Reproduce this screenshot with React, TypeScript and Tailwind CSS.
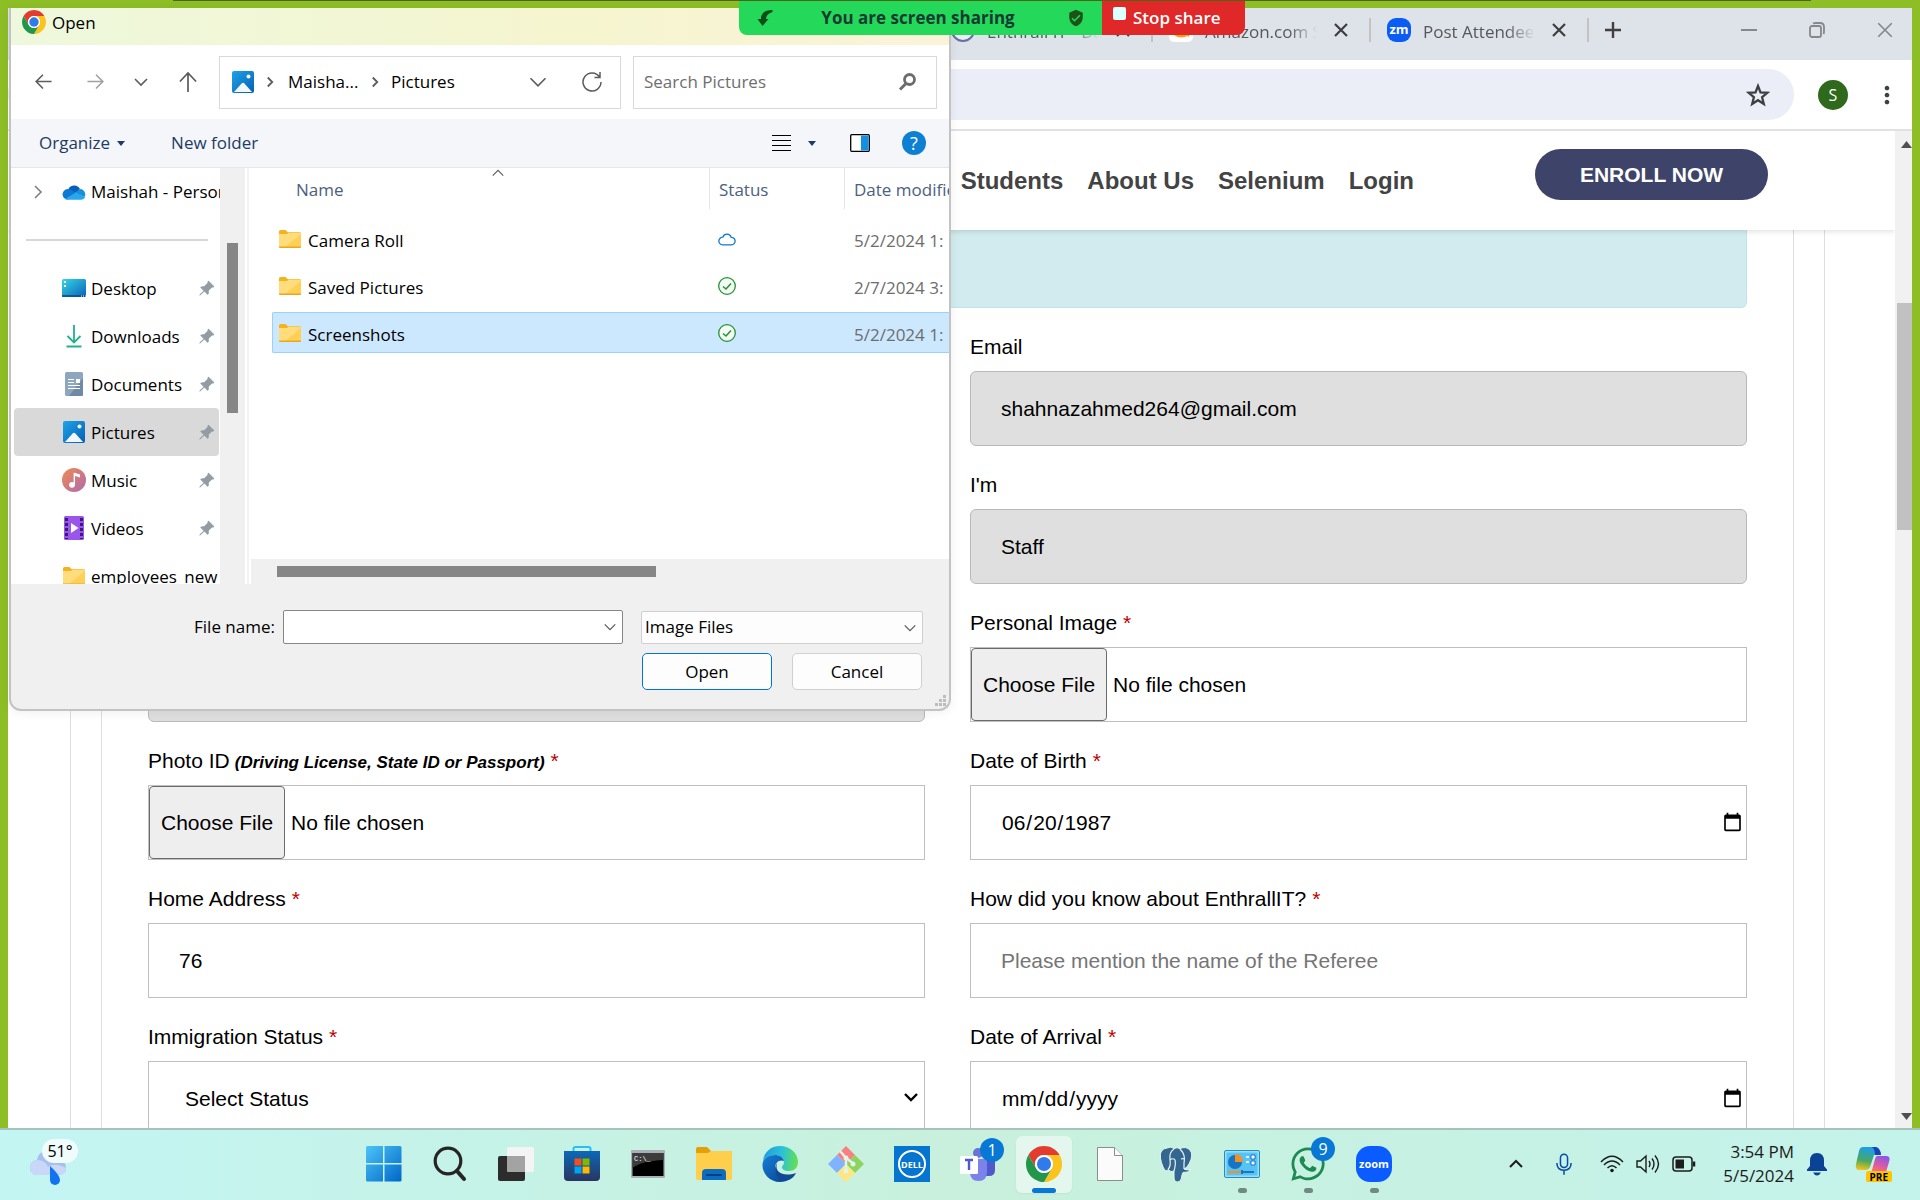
import React, { useId } from "react";
import { FaWhatsapp } from "react-icons/fa";
import { MdMoreVert, MdVerifiedUser } from "react-icons/md";
import { BsPinAngleFill } from "react-icons/bs";

/* ---------- icons ---------- */

function ChromeLogo({ className }: { className: string }) {
  return (
    <svg viewBox="2 2 44 44" className={className} aria-hidden="true">
      <path d="M4.95 13A22 22 0 0 1 43.05 13H24A11 11 0 0 0 14.47 29.5Z" fill="#e33b2e" />
      <path d="M43.05 13A22 22 0 0 1 24 46L33.53 29.5A11 11 0 0 0 24 13Z" fill="#fcc31c" />
      <path d="M24 46A22 22 0 0 1 4.95 13L14.47 29.5A11 11 0 0 0 33.53 29.5Z" fill="#22964a" />
      <circle cx="24" cy="24" r="11" fill="#fff" />
      <circle cx="24" cy="24" r="8.6" fill="#2f7bea" />
    </svg>
  );
}

function Folder() {
  return (
    <svg viewBox="0 0 22 18" className="h-[18px] w-[22px] shrink-0" aria-hidden="true">
      <path d="M0 1.5Q0 0 1.5 0H6.5L8.5 2H20.5Q22 2 22 3.5V8H0Z" fill="#f5b21c" />
      <path d="M0 4H8L9.5 2.6H20.5Q22 2.6 22 4V17H0Z" fill="#ffdc7c" />
      <path d="M22 4V17H6Z" fill="#ffd054" />
      <path d="M0 16.5H22V17.2Q22 18 21 18H1Q0 18 0 17.2Z" fill="#eaa71e" />
    </svg>
  );
}

function PictureIcon() {
  const id = useId();
  return (
    <svg viewBox="0 0 22 22" className="size-[22px] shrink-0" aria-hidden="true">
      <defs>
        <linearGradient id={id} x1="0" y1="0" x2="1" y2="1">
          <stop offset="0" stopColor="#1fa3e8" />
          <stop offset="1" stopColor="#0560b4" />
        </linearGradient>
      </defs>
      <rect width="22" height="22" rx="2" fill={`url(#${id})`} />
      <path d="M2 21L9.8 12.3Q11 11.2 12.2 12.3L20 21Z" fill="#f1f7fd" />
      <circle cx="16.5" cy="5.5" r="2" fill="#fff" />
    </svg>
  );
}

function OneDrive() {
  return (
    <svg viewBox="0 0 24 16" className="h-4 w-6 shrink-0" aria-hidden="true">
      <path d="M6 6A6.5 6.5 0 0 1 18 5L13 11Z" fill="#0a5fb8" />
      <path d="M5.5 15.5A5.2 5.2 0 1 1 8 5.6L18 11Z" fill="#0f78d4" />
      <path d="M18.5 5A5.3 5.3 0 0 1 22.5 13L12 9Z" fill="#1490df" />
      <path d="M3 15L14 8.5L23 13Q22 15.8 19 15.8H5.5Q4 15.8 3 15Z" fill="#28a8ea" />
    </svg>
  );
}

function DesktopIcon() {
  const id = useId();
  return (
    <svg viewBox="0 0 24 18" className="h-[18px] w-6 shrink-0" aria-hidden="true">
      <defs>
        <linearGradient id={id} x1="0" y1="0" x2="1" y2="1">
          <stop offset="0" stopColor="#35d6e6" />
          <stop offset="1" stopColor="#0b62b8" />
        </linearGradient>
      </defs>
      <rect width="24" height="18" rx="1.5" fill={`url(#${id})`} />
      <path d="M2 2h2v2H2zM2 6h2v2H2z" fill="#fff" />
      <path d="M0 17H24" stroke="#0a4c88" strokeWidth="1.6" />
      <path d="M19 17H24" stroke="#fff" strokeWidth="1" strokeDasharray="1 1" />
    </svg>
  );
}

function DownloadIcon() {
  return (
    <svg viewBox="0 0 18 24" className="h-6 w-[18px] shrink-0" fill="none" stroke="#22b08f" strokeWidth="1.8" aria-hidden="true">
      <path d="M9 1V18M2.5 12L9 18.5L15.500 12M1.500 22.500H16.500" />
    </svg>
  );
}

function DocumentIcon() {
  return (
    <svg viewBox="0 0 18 24" className="h-6 w-[18px] shrink-0" aria-hidden="true">
      <rect width="18" height="24" rx="1.500" fill="#8fa6c0" />
      <path d="M18 6V22.500Q18 24 16.500 24H4Z" fill="#6f89a6" />
      <path d="M3 7.500H9M3 10.500H9M3 13.500H15M3 16.500H15" stroke="#fff" strokeWidth="1.200" />
      <rect x="11" y="7" width="4" height="4" fill="#fff" />
    </svg>
  );
}

function MusicIcon() {
  const id = useId();
  return (
    <svg viewBox="0 0 24 24" className="size-6 shrink-0" aria-hidden="true">
      <defs>
        <linearGradient id={id} x1="0" y1="0" x2="1" y2="1">
          <stop offset="0" stopColor="#f08a4f" />
          <stop offset="1" stopColor="#b06ab0" />
        </linearGradient>
      </defs>
      <circle cx="12" cy="12" r="12" fill={`url(#${id})`} />
      <circle cx="10" cy="16.800" r="2.900" fill="#fff" />
      <path d="M11.600 17V4.500L18 6.500V9.500L13 8V17Z" fill="#fff" />
    </svg>
  );
}

function VideoIcon() {
  return (
    <svg viewBox="0 0 20 24" className="h-6 w-5 shrink-0" aria-hidden="true">
      <rect width="20" height="24" rx="1.500" fill="#9a55ea" />
      <path d="M2.500 2V23M17.500 2V23" stroke="#3c1a78" strokeWidth="3" strokeDasharray="3 2" />
      <path d="M7 7L14.500 12L7 17Z" fill="#fff" />
    </svg>
  );
}

function Chevron({ dir, className, stroke = 1.6 }: { dir: "down" | "right" | "up"; className: string; stroke?: number }) {
  const d = { down: "M2 5L8 11L14 5", right: "M5 2L11 8L5 14", up: "M2 11L8 5L14 11" }[dir];
  return (
    <svg viewBox="0 0 16 16" className={className} fill="none" stroke="currentColor" strokeWidth={stroke} aria-hidden="true">
      <path d={d} />
    </svg>
  );
}

function Arrow({ dir, className }: { dir: "left" | "right" | "up"; className: string }) {
  const d = {
    left: "M20 10H2M10 2L2 10L10 18",
    right: "M0 10H18M10 2L18 10L10 18",
    up: "M10 21V1M1.500 10L10 1L18.500 10",
  }[dir];
  return (
    <svg viewBox="0 0 20 21" className={className} fill="none" stroke="currentColor" strokeWidth="1.800" aria-hidden="true">
      <path d={d} />
    </svg>
  );
}

function Cross({ className, stroke = 2.2 }: { className: string; stroke?: number }) {
  return (
    <svg viewBox="0 0 16 16" className={className} stroke="currentColor" strokeWidth={stroke} aria-hidden="true">
      <path d="M2 2L14 14M14 2L2 14" />
    </svg>
  );
}

function Caret() {
  return (
    <svg viewBox="0 0 8 5" className="h-[5px] w-2" aria-hidden="true">
      <path d="M0 0H8L4 5Z" fill="#1d3b66" />
    </svg>
  );
}

/* ---------- browser ---------- */

function Tab({ icon, title }: { icon: React.ReactNode; title: string }) {
  return (
    <>
      <div className="flex w-[216px] items-center pl-4">
        {icon}
        <span className="ml-3 mt-1 w-28 overflow-hidden text-[17px] leading-6 whitespace-nowrap text-[#55585c] [mask-image:linear-gradient(to_right,black_75%,transparent_100%)]">
          {title}
        </span>
        <button aria-label={`Close ${title}`} className="ml-4 text-[#3c3e41]">
          <Cross className="size-4" />
        </button>
      </div>
      <div className="h-6 w-0.5 bg-[#c3c3c3]" />
    </>
  );
}

function BrowserChrome() {
  return (
    <>
      <div className="flex h-[52px] shrink-0 items-center justify-end bg-[#dee2e9] pr-[18px] pb-2">
        <Tab
          title="Enthrall IT - Da"
          icon={<span className="size-6 shrink-0 rounded-full border-2 border-[#6670a8] bg-[#eceef4]" />}
        />
        <Tab
          title="Amazon.com Sp"
          icon={
            <svg viewBox="0 0 24 24" className="size-6 shrink-0" aria-hidden="true">
              <rect width="24" height="24" rx="5" fill="#fff" />
              <path d="M4 15Q12 21 19 16" fill="none" stroke="#f79c1d" strokeWidth="2.500" />
              <path d="M16 14L20.500 14.500L19 18.500" fill="none" stroke="#f79c1d" strokeWidth="1.600" />
            </svg>
          }
        />
        <Tab
          title="Post Attendee -"
          icon={
            <span className="flex size-6 shrink-0 items-center justify-center rounded-[9px] bg-[#0b5cf5] pb-0.5 text-[13px] leading-none font-bold text-white">
              zm
            </span>
          }
        />
        <button aria-label="New tab" className="ml-4 text-[#3f4143]">
          <svg viewBox="0 0 16 16" className="size-4" stroke="currentColor" strokeWidth="2.400">
            <path d="M8 0V16M0 8H16" />
          </svg>
        </button>
        <div className="ml-[119px] flex items-center gap-[50px] text-[#85888c]">
          <button aria-label="Minimize">
            <svg viewBox="0 0 18 18" className="size-[18px]" stroke="currentColor" strokeWidth="2">
              <path d="M1 9H17" />
            </svg>
          </button>
          <button aria-label="Restore">
            <svg viewBox="0 0 18 18" className="size-[18px]" fill="none" stroke="currentColor" strokeWidth="1.800">
              <rect x="2" y="5" width="11" height="11" rx="2" />
              <path d="M5 2.500Q6 2 8 2H12Q16 2 16 6V10Q16 12 15.500 13" />
            </svg>
          </button>
          <button aria-label="Close window">
            <Cross className="size-[18px]" stroke={1.5} />
          </button>
        </div>
      </div>
      <div className="flex h-[71px] shrink-0 items-center border-b-2 border-[#dfe1e4] bg-white pr-[11px]">
        <div className="flex h-[51px] flex-1 items-center justify-end rounded-full bg-[#ebeef7] pr-6">
          <button aria-label="Bookmark this page" className="text-[#3c4043]">
            <svg viewBox="0 0 24 24" className="size-6" fill="none" stroke="currentColor" strokeWidth="2.300">
              <path d="M12 3L14.500 9.300L21.300 9.800L16.100 14.200L17.800 20.900L12 17.200L6.200 20.900L7.900 14.200L2.700 9.800L9.500 9.300Z" />
            </svg>
          </button>
        </div>
        <button className="ml-6 flex size-[30px] items-center justify-center rounded-full bg-[#2f691c] text-base text-white">S</button>
        <button aria-label="Menu" className="ml-[25px] text-[#3c4043]">
          <MdMoreVert size={28} />
        </button>
      </div>
    </>
  );
}

/* ---------- web page form ---------- */

function Field({ id, label, note, required, place, children }: { id: string; label: string; note?: string; required?: boolean; place: string; children: React.ReactNode }) {
  return (
    <div className={place}>
      <label htmlFor={id} className="mb-3 block h-6 leading-6">
        {label}
        {note && <b className="ml-[5px] text-[17px] italic">{note}</b>}
        {required && <span className="ml-1.5 text-[#c00000]">*</span>}
      </label>
      {children}
    </div>
  );
}

const box = "block h-[75px] w-full border border-[#bfbfbf] bg-white";
const gray = "block h-[75px] w-full rounded-md border border-[#b9b9b9] bg-[#dfdfdf] pl-[30px]";
const file =
  "block h-[75px] w-full border border-[#bfbfbf] bg-white file:mr-1.5 file:h-[73px] file:rounded-sm file:border file:border-solid file:border-[#6b6b6b] file:bg-[#eeeeee] file:px-[11px]";

function WebPage() {
  return (
    <div className="flex min-h-0 flex-1 bg-white">
      <main className="min-w-0 flex-1 overflow-hidden font-['Liberation_Sans',Arial,sans-serif] text-[21px] text-black">
        <header className="relative flex h-[99px] items-start justify-end bg-white pt-[18px] pr-[127px] shadow-[0_1px_6px_rgba(0,0,0,0.15)]">
          <nav className="flex gap-6 pt-4 pr-[121px] text-2xl leading-8 font-bold text-[#434343]">
            <a href="#students">Students</a>
            <a href="#about">About Us</a>
            <a href="#selenium">Selenium</a>
            <a href="#login">Login</a>
          </nav>
          <a href="#enroll" className="flex h-[51px] w-[233px] items-center justify-center rounded-full bg-[#3e4469] font-bold text-white">
            ENROLL NOW
          </a>
        </header>
        <div className="mr-[70px] ml-[62px] border-x border-[#dedede] px-[30px]">
          <div className="border-x border-[#dedede] px-[46px]">
            <div className="h-[78px] rounded-b-md border border-t-0 border-[#bee5eb] bg-[#d1ebef]" />
            <form className="mt-[27px] grid grid-cols-2 gap-x-[45px] gap-y-[27px]">
              <Field id="email" label="Email" place="col-start-2">
                <input id="email" className={gray} readOnly value="shahnazahmed264@gmail.com" />
              </Field>
              <Field id="role" label="I'm" place="col-start-2">
                <input id="role" className={gray} readOnly value="Staff" />
              </Field>
              <div className="col-start-1 self-end">
                <input aria-label="Phone" className={gray} readOnly />
              </div>
              <Field id="image" label="Personal Image" required place="col-start-2">
                <input id="image" type="file" className={file} />
              </Field>
              <Field id="photo" label="Photo ID" note="(Driving License, State ID or Passport)" required place="col-start-1">
                <input id="photo" type="file" className={file} />
              </Field>
              <Field id="dob" label="Date of Birth" required place="col-start-2">
                <input id="dob" type="date" defaultValue="1987-06-20" className={`${box} pr-px pl-[30px]`} />
              </Field>
              <Field id="address" label="Home Address" required place="col-start-1">
                <input id="address" defaultValue="76" className={`${box} pl-[30px]`} />
              </Field>
              <Field id="referee" label="How did you know about EnthrallIT?" required place="col-start-2">
                <input id="referee" placeholder="Please mention the name of the Referee" className={`${box} pl-[30px] placeholder:text-[#757575]`} />
              </Field>
              <Field id="status" label="Immigration Status" required place="col-start-1">
                <div className="relative">
                  <select id="status" className={`${box} appearance-none pl-9`}>
                    <option>Select Status</option>
                  </select>
                  <Chevron dir="down" stroke={2.4} className="pointer-events-none absolute top-7 right-1.5 size-4" />
                </div>
              </Field>
              <Field id="arrival" label="Date of Arrival" required place="col-start-2">
                <input id="arrival" type="date" className={`${box} pr-px pl-[30px]`} />
              </Field>
            </form>
          </div>
        </div>
      </main>
      <div className="flex w-[17px] shrink-0 flex-col items-end bg-[#f1f1f1]">
        <svg viewBox="0 0 11 7" className="mt-2.5 h-[7px] w-[11px]"><path d="M0 7L5.500 0L11 7Z" fill="#505050" /></svg>
        <div className="mt-[155px] h-[227px] w-[15px] bg-[#c1c1c1]" />
        <svg viewBox="0 0 11 7" className="mt-auto mb-2 h-[7px] w-[11px]"><path d="M0 0L5.500 7L11 0Z" fill="#505050" /></svg>
      </div>
    </div>
  );
}

/* ---------- file dialog ---------- */

const places = [
  { name: "Desktop", icon: <DesktopIcon /> },
  { name: "Downloads", icon: <DownloadIcon /> },
  { name: "Documents", icon: <DocumentIcon /> },
  { name: "Pictures", icon: <PictureIcon />, active: true },
  { name: "Music", icon: <MusicIcon /> },
  { name: "Videos", icon: <VideoIcon /> },
];

const entries = [
  { name: "Camera Roll", cloud: true, date: "5/2/2024 1:" },
  { name: "Saved Pictures", cloud: false, date: "2/7/2024 3:" },
  { name: "Screenshots", cloud: false, date: "5/2/2024 1:", selected: true },
];

function StatusIcon({ cloud }: { cloud: boolean }) {
  return cloud ? (
    <svg viewBox="0 0 18 14" className="h-3.5 w-[18px]" fill="none" stroke="#0f7ad6" strokeWidth="1.300" role="img" aria-label="Online only">
      <path d="M4.500 12.800A3.700 3.700 0 1 1 4.800 5.200A4.400 4.400 0 0 1 13.200 5.400A3.700 3.700 0 1 1 13.600 12.800Z" />
    </svg>
  ) : (
    <svg viewBox="0 0 18 18" className="size-[18px]" fill="#f4fbf4" stroke="#249230" strokeWidth="1.300" role="img" aria-label="Available">
      <circle cx="9" cy="9" r="8.300" />
      <path d="M5 9.500L8 12L13 6.500" fill="none" strokeWidth="1.500" />
    </svg>
  );
}

function FileDialog() {
  return (
    <section
      role="dialog"
      aria-label="Open"
      className="absolute top-2 left-[9px] flex w-[942px] flex-col overflow-hidden rounded-b-xl border-2 border-t-0 border-[#c3c3c3] bg-[#f0f0f0] text-black shadow-[0_2px_12px_rgba(0,0,0,0.06)]"
    >
      <div className="flex h-[37px] items-start bg-linear-to-r from-[#eef8dc] via-[#f5f5cf] via-60% to-[#fbf3d9] pl-[11px]">
        <ChromeLogo className="mt-0.5 size-6" />
        <h1 className="ml-1.5 leading-[29px]">Open</h1>
      </div>
      <div className="flex h-[74px] items-center bg-white pr-3 pl-[23px] text-[#5c5c5c]">
        <button aria-label="Back"><Arrow dir="left" className="size-[18px]" /></button>
        <button aria-label="Forward" className="ml-[35px] text-[#a0a0a0]"><Arrow dir="right" className="size-[18px]" /></button>
        <button aria-label="Recent" className="ml-7"><Chevron dir="down" className="size-4" /></button>
        <button aria-label="Up" className="ml-[29px]"><Arrow dir="up" className="size-5" /></button>
        <div className="ml-[21px] flex h-[53px] w-[402px] items-center border border-[#d9d9d9] pl-3">
          <PictureIcon />
          <Chevron dir="right" stroke={2.4} className="ml-2.5 size-3 shrink-0" />
          <span className="ml-3 w-[71px] text-black">Maisha...</span>
          <Chevron dir="right" stroke={2.4} className="ml-2.5 size-3 shrink-0" />
          <span className="ml-2.5 text-black">Pictures</span>
          <button aria-label="Previous locations" className="ml-auto"><Chevron dir="down" stroke={1.3} className="size-5" /></button>
          <button aria-label="Refresh" className="mr-[18px] ml-[34px]">
            <svg viewBox="0 0 20 22" className="h-[22px] w-5" fill="none" stroke="currentColor" strokeWidth="1.500">
              <path d="M17.500 6A9 9 0 1 0 19 11M18 1V6.500H12.500" />
            </svg>
          </button>
        </div>
        <div className="ml-3 flex h-[53px] flex-1 items-center border border-[#d9d9d9] pr-[19px] pl-2.5">
          <input aria-label="Search Pictures" placeholder="Search Pictures" className="min-w-0 flex-1 placeholder:text-[#6e6e6e]" />
          <svg viewBox="0 0 20 20" className="size-5" fill="none" stroke="#6c6c6c" aria-hidden="true">
            <circle cx="12.500" cy="7.500" r="5" strokeWidth="2.800" />
            <path d="M9 11.500L3 17.500" strokeWidth="3" />
          </svg>
        </div>
      </div>
      <div className="flex h-[49px] items-center border-b border-[#e4e6e9] bg-[#f4f6f9] pr-[23px] pl-7 text-[#1d3b66]">
        <button className="flex items-center gap-[7px]">Organize <Caret /></button>
        <button className="ml-[46px]">New folder</button>
        <button aria-label="View" className="ml-auto flex items-center gap-[17px]">
          <svg viewBox="0 0 19 18" className="h-[18px] w-[19px]" stroke="#000" strokeWidth="1.100"><path d="M0 1.500H19M0 6.500H19M0 11.500H19M0 16.500H19" /></svg>
          <Caret />
        </button>
        <button aria-label="Preview pane" className="ml-[34px]">
          <svg viewBox="0 0 20 18" className="h-[18px] w-5"><rect x="0.700" y="0.700" width="18.600" height="16.600" rx="1" fill="#fff" stroke="#000" strokeWidth="1.300" /><path d="M11 1.400H18.600V16.600H11Z" fill="#1590e0" /></svg>
        </button>
        <button aria-label="Help" className="ml-8 flex size-6 items-center justify-center rounded-full bg-[#0d80d4] text-lg leading-none text-white">?</button>
      </div>

      <div className="flex h-[416px] bg-white">
        <aside className="flex w-[209px] shrink-0 flex-col overflow-hidden pl-[3px] whitespace-nowrap">
          <div className="flex h-12 shrink-0 items-center pl-4">
            <Chevron dir="right" stroke={1.6} className="size-4 shrink-0 text-[#808080]" />
            <span className="ml-4 shrink-0"><OneDrive /></span>
            <span className="ml-[5px]">Maishah - Personal</span>
          </div>
          <div className="mt-[23px] mr-3 ml-3 h-0.5 shrink-0 bg-[#d8d8d8]" />
          <ul className="mt-[23px]">
            {places.map((p) => (
              <li key={p.name}>
                <button className={`flex h-12 w-[205px] items-center rounded-sm pl-12 ${p.active ? "bg-[#d9d9d9]" : ""}`}>
                  <span className="flex w-6 justify-center">{p.icon}</span>
                  <span className="mt-0.5 ml-[5px]">{p.name}</span>
                  <BsPinAngleFill size={17} className="mr-1 ml-auto text-[#939ca3]" />
                </button>
              </li>
            ))}
            <li>
              <button className="flex h-12 items-center pl-12">
                <span className="flex w-6 justify-center"><Folder /></span>
                <span className="mt-0.5 ml-[5px]">employees_new</span>
              </button>
            </li>
          </ul>
        </aside>
        <div className="w-[25px] shrink-0 bg-[#f0f0f0] pt-[75px] pl-[7px]">
          <div className="h-[170px] w-[11px] bg-[#868686]" />
        </div>
        <div className="mr-0.5 ml-0.5 w-0.5 shrink-0 bg-[#f3f3f3]" />
        <div className="flex min-w-0 flex-1 flex-col">
          <div className="relative flex-1 overflow-hidden pl-[21px]">
            <Chevron dir="up" stroke={1.3} className="absolute -top-0.5 left-[240px] size-3.5 text-[#5c5c5c]" />
            <table className="w-full table-fixed text-left whitespace-nowrap">
              <colgroup>
                <col className="w-[438px]" />
                <col className="w-[135px]" />
                <col />
              </colgroup>
              <thead className="text-[#4c6080]">
                <tr className="h-[47px] align-top">
                  <th className="p-0 font-normal"><div className="h-[41px] border-r border-[#e5e5e5] pl-6 leading-[43px]">Name</div></th>
                  <th className="p-0 font-normal"><div className="h-[41px] border-r border-[#e5e5e5] pl-[9px] leading-[43px]">Status</div></th>
                  <th className="p-0 font-normal"><div className="h-[41px] pl-[9px] leading-[43px]">Date modified</div></th>
                </tr>
              </thead>
              <tbody>
                {entries.map((e) => {
                  const cell = e.selected ? "border-y border-[#99d1ff] bg-[#cce8ff]" : "";
                  return (
                    <tr key={e.name} className="h-[47px]">
                      <td className="p-0">
                        <div className={`flex h-[41px] items-center pl-1.5 ${cell} ${e.selected ? "rounded-l-xs border-l" : "ml-px"}`}>
                          <Folder />
                          <span className="mt-1 ml-[7px]">{e.name}</span>
                        </div>
                      </td>
                      <td className="p-0">
                        <div className={`flex h-[41px] items-center pl-2 ${cell}`}><StatusIcon cloud={e.cloud} /></div>
                      </td>
                      <td className="p-0">
                        <div className={`flex h-[41px] items-center pl-[9px] text-[#6d6d6d] ${cell}`}><span className="mt-1">{e.date}</span></div>
                      </td>
                    </tr>
                  );
                })}
              </tbody>
            </table>
          </div>
          <div className="h-[25px] bg-[#f0f0f0] pt-[7px] pl-[26px]">
            <div className="h-[11px] w-[379px] bg-[#868686]" />
          </div>
        </div>
      </div>

      <div className="relative h-[125px] pt-[26px] pr-[26px]">
        <div className="flex items-center justify-end">
          <label htmlFor="filename" className="mr-2">File name:</label>
          <div className="relative w-[340px]">
            <input id="filename" className="block h-[34px] w-full rounded-xs border border-[#868686] bg-white pr-7 pl-1" />
            <Chevron dir="down" stroke={1.5} className="absolute top-2.5 right-1.5 size-3.5 text-[#5c5c5c]" />
          </div>
          <div className="relative ml-[18px] w-[282px]">
            <select aria-label="File type" className="block h-[33px] w-full appearance-none rounded-xs border border-[#cfcfcf] bg-[#fdfdfd] pl-[3px]">
              <option>Image Files</option>
            </select>
            <Chevron dir="down" stroke={1.5} className="pointer-events-none absolute top-2.5 right-1.5 size-3.5 text-[#5c5c5c]" />
          </div>
        </div>
        <div className="mt-[9px] flex justify-end gap-5 pr-px">
          <button className="h-[37px] w-[130px] rounded-[5px] border border-[#0074d1] bg-[#fdfdfd]">Open</button>
          <button className="h-[37px] w-[130px] rounded-[5px] border border-[#d0d0d0] bg-[#fdfdfd]">Cancel</button>
        </div>
        <svg viewBox="0 0 11 11" className="absolute right-[3px] bottom-[3px] size-[11px]" fill="#bdbdbd">
          <path d="M8 0h3v3H8zM8 4h3v3H8zM4 4h3v3H4zM8 8h3v3H8zM4 8h3v3H4zM0 8h3v3H0z" />
        </svg>
      </div>
    </section>
  );
}

/* ---------- screen share banner ---------- */

function ShareBanner() {
  return (
    <div className="absolute top-0 left-[739px] flex h-[35px] overflow-hidden rounded-b-lg text-[17px] leading-[35px] font-bold">
      <div className="flex w-[363px] items-center bg-[#24d959] pr-[17px] pl-[18px] text-[#173a33]">
        <svg viewBox="0 0 15 16" className="size-4" fill="#0b4f16" aria-hidden="true">
          <path d="M15 0Q8 0 5.500 3Q3.500 5 3.500 9H0L5 16L11 9H8.500Q8.500 4 15 2Z" />
        </svg>
        <span className="flex-1 pr-1 text-center">You are screen sharing</span>
        <MdVerifiedUser size={18} className="text-[#1d5218]" />
      </div>
      <button className="flex w-[143px] bg-[#e02828] pl-[11px] font-semibold text-white">
        <span className="mt-[7px] mr-[7px] size-[13px] rounded-xs bg-[#dcffff]" />
        Stop share
      </button>
    </div>
  );
}

/* ---------- taskbar ---------- */

function EdgeIcon() {
  return (
    <svg viewBox="0 0 36 36" className="size-9" aria-hidden="true">
      <defs>
        <linearGradient id="edge-top" x1="0" y1="0.400" x2="1" y2="0.500"><stop offset="0" stopColor="#1b9de2" /><stop offset="0.550" stopColor="#2cc3d5" /><stop offset="1" stopColor="#66e04a" /></linearGradient>
        <linearGradient id="edge-low" x1="0" y1="0" x2="1" y2="1"><stop offset="0" stopColor="#1480d8" /><stop offset="1" stopColor="#0b3f8c" /></linearGradient>
      </defs>
      <path d="M1 15C2 6 9 0 18 0C28 0 36 7 36 16C36 22 32 25 27 25C22 25 20 23 20 21C20 20 22 19 22 16C22 12 18 9 13 9C7 9 2 12 1 15Z" fill="url(#edge-top)" />
      <path d="M0.500 18C1 12 7 9 13 9C17 9 21 11 22 15C17 13 13 17 13 22C13 30 20 34 28 33C25 35 22 36 18 36C8 36 0 28 0.500 18Z" fill="url(#edge-low)" />
      <path d="M15 17C12 27 22 31 34 27C31 33 26 35.500 21 34C13 32 11 23 15 17Z" fill="#114a94" />
    </svg>
  );
}

function ElephantIcon() {
  return (
    <svg viewBox="0 0 34 36" className="h-9 w-[34px]" aria-hidden="true">
      <path
        d="M8 2Q12 0 15 2.500Q18 1 21 2.500Q27 0 31 4Q35 9 30 18Q28 22 25 23Q28 24.500 32 23.500Q29 27 24 26.500Q23 28 22.500 32Q22 36 18.500 36Q15 36 15 31V25Q12 27 9 23.500Q7 27 4 21Q0 11 2 6Q4 2 8 2Z"
        fill="#336791"
        stroke="#e8f6f0"
        strokeWidth="1"
      />
      <path d="M15 3Q10 6 11 14Q12 20 9 23.500M21 3Q27 9 25 17V23M11 14Q14 11.500 16 14Q17 18 15 25M22 13Q25 12 25.500 14" fill="none" stroke="#e8f6f0" strokeWidth="1.200" />
    </svg>
  );
}

function CountBadge({ n }: { n: number }) {
  return <span className="absolute -top-2 -right-2 flex size-6 items-center justify-center rounded-full bg-[#0877d6] text-base leading-none text-white">{n}</span>;
}

const apps: { name: string; icon: React.ReactNode; state?: "active" | "open" }[] = [
  {
    name: "Start",
    icon: (
      <svg viewBox="0 0 36 36" className="size-9">
        <defs><linearGradient id="win" x1="0" y1="0" x2="1" y2="1"><stop offset="0" stopColor="#4cc4f7" /><stop offset="1" stopColor="#0067c8" /></linearGradient></defs>
        <path d="M0 1.500Q0 0 1.500 0H17V17H0ZM18.500 0H34Q35.500 0 35.500 1.500V17H18.500ZM0 18.500H17V35.500H1.500Q0 35.500 0 34ZM18.500 18.500H35.500V34Q35.500 35.500 34 35.500H18.500Z" fill="url(#win)" />
      </svg>
    ),
  },
  {
    name: "Search",
    icon: (
      <svg viewBox="0 0 34 36" className="h-9 w-[34px]" fill="none" stroke="#252525">
        <circle cx="15" cy="15" r="12.800" strokeWidth="3.200" />
        <path d="M24 25L31 33" strokeWidth="4" strokeLinecap="round" />
      </svg>
    ),
  },
  {
    name: "Task view",
    icon: (
      <svg viewBox="0 0 36 36" className="size-9">
        <rect y="10" width="27" height="25" rx="2" fill="#2c2c2c" />
        <rect x="9" y="1" width="27" height="25" rx="2" fill="#f4f4f4" />
        <path d="M9 10H27V26H11Q9 26 9 24Z" fill="#a3a3a3" />
      </svg>
    ),
  },
  {
    name: "Microsoft Store",
    icon: (
      <svg viewBox="0 0 36 36" className="size-9">
        <defs><linearGradient id="store" x1="0" y1="0" x2="0" y2="1"><stop offset="0" stopColor="#0b69b7" /><stop offset="1" stopColor="#2a3560" /></linearGradient></defs>
        <path d="M9.500 6V3Q9.500 1 11.500 1H24.500Q26.500 1 26.500 3V6" fill="none" stroke="#28c0f4" strokeWidth="2" />
        <path d="M0 5H36V31Q36 35 32 35H4Q0 35 0 31Z" fill="url(#store)" />
        <path d="M10.500 12.500h7v7h-7z" fill="#f25022" /><path d="M18.500 12.500h7v7h-7z" fill="#7fba00" />
        <path d="M10.500 20.500h7v7h-7z" fill="#00a4ef" /><path d="M18.500 20.500h7v7h-7z" fill="#ffb900" />
      </svg>
    ),
  },
  {
    name: "Command Prompt",
    icon: (
      <svg viewBox="0 0 34 28" className="h-7 w-[34px]">
        <rect width="34" height="28" rx="1" fill="#a9b0b5" />
        <rect x="1.500" y="3" width="31" height="23" fill="#000" />
        <path d="M1.500 3H32.500V10Q10 11 1.500 18Z" fill="#3c3c3c" />
        <text x="3" y="11" fontSize="7" fill="#fff" fontFamily="Liberation Mono">C:\_</text>
      </svg>
    ),
  },
  {
    name: "File Explorer",
    icon: (
      <svg viewBox="0 0 36 34" className="h-[34px] w-9">
        <path d="M0 2Q0 0 2 0H11L15 4H34Q36 4 36 6V12H0Z" fill="#e3a008" />
        <path d="M0 6H12L15 4H34Q36 4 36 6V31Q36 33 34 33H2Q0 33 0 31Z" fill="#ffce4b" />
        <path d="M6 33V26Q6 22 10 22H26Q30 22 30 26V33Z" fill="#0c6cc0" />
        <path d="M11 28H25" stroke="#083f7d" strokeWidth="2" strokeLinecap="round" />
      </svg>
    ),
  },
  { name: "Edge", icon: <EdgeIcon /> },
  {
    name: "Git",
    icon: (
      <svg viewBox="0 0 36 36" className="size-9">
        <path d="M18 0L27 9L18 18L9 9Z" fill="#f98080" /><path d="M9 9L18 18L9 27L0 18Z" fill="#80b3ff" />
        <path d="M27 9L36 18L27 27L18 18Z" fill="#8dd35f" /><path d="M18 18L27 27L18 36L9 27Z" fill="#ffe680" />
        <path d="M12 5L18 12V26M18 12L26 18" fill="none" stroke="#dff5ea" strokeWidth="2.400" />
        <circle cx="18" cy="12" r="2.500" fill="#dff5ea" /><circle cx="18" cy="25" r="2.500" fill="#dff5ea" /><circle cx="25" cy="18" r="2.500" fill="#dff5ea" />
      </svg>
    ),
  },
  {
    name: "Dell",
    icon: (
      <span className="flex size-9 items-center justify-center bg-[#0675cf]">
        <span className="flex size-7 items-center justify-center rounded-full border-2 border-white text-[9px] leading-none font-bold text-white">DELL</span>
      </span>
    ),
  },
  {
    name: "Teams",
    icon: (
      <span className="relative block">
        <svg viewBox="0 0 36 36" className="size-9">
          <circle cx="18" cy="7" r="5" fill="#6a74d8" />
          <path d="M24 13H34Q35 13 35 14V24Q35 30 29 30H24Z" fill="#5059c9" />
          <path d="M10 13H27V26Q27 35 18.500 35Q10 35 10 26Z" fill="#7b83eb" />
          <rect y="10" width="18" height="18" rx="1.500" fill="#fff" />
          <path d="M5 14H13M9 14V24" stroke="#5059c9" strokeWidth="2.400" />
        </svg>
        <CountBadge n={1} />
      </span>
    ),
  },
  { name: "Chrome", state: "active", icon: <ChromeLogo className="size-9" /> },
  {
    name: "Document",
    icon: (
      <svg viewBox="0 0 26 34" className="h-[34px] w-[26px]" fill="#fbfbfb" stroke="#8d8d8d">
        <path d="M0.500 0.500H17.500L25.500 8.500V33.500H0.500Z" /><path d="M17.500 0.500V8.500H25.500" />
      </svg>
    ),
  },
  { name: "PostgreSQL", icon: <ElephantIcon /> },
  {
    name: "Control Panel",
    state: "open",
    icon: (
      <svg viewBox="0 0 36 28" className="h-7 w-9">
        <rect x="0.500" y="0.500" width="35" height="27" rx="1.500" fill="#9fdcf8" stroke="#1e8fc9" />
        <rect x="2.500" y="2.500" width="31" height="23" fill="#56c3f3" />
        <circle cx="11" cy="12" r="7" fill="#1874c4" /><path d="M11 12V4A8 8 0 0 1 19 12Z" fill="#f78f1e" />
        <path d="M22 7H25M22 12H25" stroke="#fff" strokeWidth="1.500" /><path d="M27 5h4v4h-4zM27 11h4v4h-4z" fill="#fff" stroke="#1874c4" />
        <path d="M4 22H18" stroke="#f78f1e" strokeWidth="2" /><path d="M18 22H30M18 20V24" stroke="#1874c4" strokeWidth="2" />
      </svg>
    ),
  },
  {
    name: "WhatsApp",
    state: "open",
    icon: (
      <span className="relative block">
        <FaWhatsapp size={38} className="text-[#1d8a52]" />
        <CountBadge n={9} />
      </span>
    ),
  },
  {
    name: "Zoom",
    state: "open",
    icon: <span className="flex size-9 items-center justify-center rounded-[14px] bg-[#0b5cff] pb-0.5 text-[11px] leading-none font-bold text-white">zoom</span>,
  },
];

function Taskbar() {
  return (
    <footer className="flex h-[72px] shrink-0 items-center border-t-2 border-[#a6c3bb] bg-linear-to-r from-[#c3f5f3] via-[#c8f0dc] via-50% to-[#c4f3eb]">
      <div className="w-[351px] pl-[30px]">
        <button aria-label="Weather" className="relative mb-2 block h-11 w-12">
          <svg viewBox="0 0 48 46" className="h-[46px] w-12">
            <path d="M8 36Q0 36 0 29Q0 22 7 21Q8 12 18 12Q27 12 29 21Q36 22 36 29Q36 36 28 36Z" fill="#a9bff0" />
            <path d="M8 36Q0 36 0 29Q0 22 8 21Q16 22 18 28Q24 23 36 29Q36 36 28 36Z" fill="#c9d8f9" />
            <path d="M20 27Q30 36 30 41A5 5 0 0 1 20 41Z" fill="#1273f2" />
          </svg>
          <span className="absolute top-0 left-3 flex h-6 w-9 items-center justify-center rounded-full bg-[#f0fbfb] text-base leading-none text-black">51°</span>
        </button>
      </div>
      <div className="flex h-full items-center">
        {apps.map((a) => (
          <button key={a.name} aria-label={a.name} className="relative flex h-full w-[66px] items-center justify-center pb-0.5">
            <span className={a.state === "active" ? "flex h-[57px] w-14 items-center justify-center rounded-md bg-[#e3f7ee] shadow-xs" : "flex"}>{a.icon}</span>
            {a.state === "active" && <span className="absolute bottom-[7px] h-[5px] w-6 rounded-full bg-[#0877d6]" />}
            {a.state === "open" && <span className="absolute bottom-[7px] h-[5px] w-[9px] rounded-full bg-[#6f8a80]" />}
          </button>
        ))}
      </div>
      <div className="ml-auto flex items-center pr-[30px] pb-0.5 text-[#1c1c1c]">
        <Chevron dir="up" stroke={2} className="size-4" />
        <svg viewBox="0 0 18 24" className="ml-8 h-6 w-4" fill="none" stroke="#0a4ba8" strokeWidth="1.700">
          <rect x="5" y="1" width="8" height="15" rx="4" /><path d="M1 11Q1 19 9 19Q17 19 17 11M9 19V24" />
        </svg>
        <svg viewBox="0 0 24 18" className="ml-7 h-[18px] w-6" fill="none" stroke="currentColor" strokeWidth="1.500">
          <path d="M1 7Q12 -4.500 23 7M4 10Q12 2 20 10M7.500 13Q12 8.500 16.500 13" /><circle cx="12" cy="15.500" r="1.800" fill="currentColor" stroke="none" />
        </svg>
        <svg viewBox="0 0 24 20" className="ml-3 h-5 w-6" fill="none" stroke="currentColor" strokeWidth="1.400">
          <path d="M1 7H4.500L10 2V18L4.500 13H1ZM13 7Q15 10 13 13M16 4.500Q20 10 16 15.500M19 1.500Q26 10 19 18.500" />
        </svg>
        <svg viewBox="0 0 24 16" className="ml-3 h-4 w-6" fill="none" stroke="currentColor" strokeWidth="1.500">
          <rect x="1" y="1" width="19" height="14" rx="3" /><path d="M3.500 3.500H12V12.500H3.500Z" fill="currentColor" stroke="none" /><path d="M22 5.500V10.500" strokeWidth="2.500" />
        </svg>
        <div className="ml-3 w-[86px] text-right text-[17px] leading-6">
          3:54 PM
          <br />
          5/5/2024
        </div>
        <svg viewBox="0 0 20 24" className="ml-[13px] h-6 w-5" fill="#0a4396">
          <path d="M10 1Q17 1 17 9V14L20 17.500V19H0V17.500L3 14V9Q3 1 10 1ZM6 20.500H14Q12.500 23.500 10 23.500Q7.500 23.500 6 20.500Z" />
        </svg>
        <div className="relative ml-7 h-9 w-[35px]">
          <svg viewBox="0 0 35 30" className="h-[30px] w-[35px]">
            <defs>
              <linearGradient id="cp-a" x1="0.500" y1="0" x2="0.300" y2="1"><stop offset="0" stopColor="#1a9df0" /><stop offset="0.600" stopColor="#49a862" /><stop offset="1" stopColor="#f0c419" /></linearGradient>
              <linearGradient id="cp-b" x1="0.700" y1="0" x2="0.300" y2="1"><stop offset="0" stopColor="#8d55e8" /><stop offset="0.600" stopColor="#ee5d90" /><stop offset="1" stopColor="#f7894a" /></linearGradient>
            </defs>
            <path d="M8 1H20Q25 1 26 9H19L15 21Q14 24 10 24H4Q0 24 1 18L4 5Q5 1 8 1Z" fill="url(#cp-a)" />
            <path d="M17 1H20Q25 1 26 9H20Q20 3 17 1Z" fill="#1a3fbd" />
            <path d="M22 10H31Q36 10 34 16L31 26Q30 29 26 29H12Q16 28 17 24L20 13Q21 10 22 10Z" fill="url(#cp-b)" />
          </svg>
          <span className="absolute -right-0.5 bottom-0 flex h-[11px] items-center rounded-xs bg-[#ffc400] px-1 text-[10px] leading-none font-bold text-black">PRE</span>
        </div>
      </div>
    </footer>
  );
}

export default function App() {
  return (
    <div className="relative flex h-screen flex-col overflow-hidden bg-[#8dbe26] font-['Open_Sans','Noto_Sans',sans-serif] text-[17px]">
      <div className="mx-2 mt-2 flex min-h-0 flex-1 flex-col">
        <BrowserChrome />
        <WebPage />
      </div>
      <Taskbar />
      <FileDialog />
      <ShareBanner />
      <div className="absolute inset-x-0 top-0 mr-[109px] ml-[173px] h-px bg-[#4d6410]" />
    </div>
  );
}
